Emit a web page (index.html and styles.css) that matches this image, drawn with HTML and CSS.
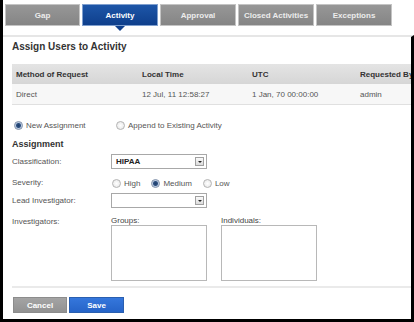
FILE: index.html
```html
<!DOCTYPE html>
<html>
<head>
<meta charset="utf-8">
<link rel="stylesheet" href="styles.css">
</head>
<body>
<div class="frame">
  <div class="tabs">
    <div class="tab">Gap</div>
    <div class="tab active">Activity</div>
    <div class="tab">Approval</div>
    <div class="tab">Closed Activities</div>
    <div class="tab">Exceptions</div>
  </div>
  <div class="panel">
    <div class="title">Assign Users to Activity</div>
    <table class="grid">
      <thead>
        <tr><th class="c1">Method of Request</th><th class="c2">Local Time</th><th class="c3">UTC</th><th class="c4">Requested By</th></tr>
      </thead>
      <tbody>
        <tr><td>Direct</td><td>12 Jul, 11 12:58:27</td><td>1 Jan, 70 00:00:00</td><td>admin</td></tr>
      </tbody>
    </table>
    <div class="mode">
      <span class="opt"><span class="radio on"></span>New Assignment</span>
      <span class="opt"><span class="radio"></span>Append to Existing Activity</span>
    </div>
    <div class="section">Assignment</div>
    <div class="form">
      <div class="label">Classification:</div>
      <div class="select"><span class="val">HIPAA</span><span class="drop"></span></div>
      <div class="label sev">Severity:</div>
      <div class="sevopts">
        <span class="opt"><span class="radio"></span>High</span>
        <span class="opt"><span class="radio on"></span>Medium</span>
        <span class="opt"><span class="radio"></span>Low</span>
      </div>
      <div class="label lead">Lead Investigator:</div>
      <div class="select lead"><span class="val"></span><span class="drop"></span></div>
      <div class="label inv">Investigators:</div>
      <div class="lists">
        <div class="list"><div class="lname">Groups:</div><div class="box"></div></div>
        <div class="list"><div class="lname">Individuals:</div><div class="box"></div></div>
      </div>
    </div>
    <div class="sep"></div>
    <div class="buttons">
      <button class="btn cancel">Cancel</button>
      <button class="btn save">Save</button>
    </div>
  </div>
</div>
</body>
</html>
```
FILE: styles.css
```css
html, body { margin: 0; padding: 0; }
body {
  background: #000;
  width: 414px;
  height: 322px;
  overflow: hidden;
  font-family: "Liberation Sans", Arial, sans-serif;
  font-size: 8px;
  color: #555;
}
.frame {
  margin-left: 3px;
  width: 411px;
  height: 319px;
  background: #fff;
  display: flex;
  flex-direction: column;
}
.tabs {
  display: flex;
  gap: 2px;
  padding: 4px 0 0 2px;
  height: 31px;
  box-sizing: border-box;
}
.tab {
  position: relative;
  width: 76px;
  height: 22px;
  box-sizing: border-box;
  background: linear-gradient(#979797, #858585);
  border: 1px solid #c4c4c4;
  color: #ececec;
  font-weight: bold;
  font-size: 8px;
  display: flex;
  align-items: center;
  justify-content: center;
}
.tab:first-child { width: 75px; }
.tab.active {
  background: linear-gradient(#1d56a8, #0f3f8c);
  border-color: #7f9fce;
  color: #fff;
}
.tab.active::after {
  content: "";
  position: absolute;
  left: 50%;
  bottom: -6px;
  margin-left: -5px;
  border-left: 5px solid transparent;
  border-right: 5px solid transparent;
  border-top: 5px solid #0f3f8c;
}
.panel {
  flex: 1;
  margin-top: 4px;
  border-top: 2px solid #e6e6e6;
  border-right: 3px solid #000;
  padding-left: 9px;
  overflow: hidden;
  display: flex;
  flex-direction: column;
  align-items: flex-start;
}
.title {
  margin-top: 4px;
  line-height: 12px;
  font-size: 10px;
  font-weight: bold;
  color: #333;
}
.grid {
  margin-top: 11px;
  width: 420px;
  border-collapse: collapse;
  flex-shrink: 0;
}
.grid th, .grid td {
  text-align: left;
  padding: 0 0 0 4px;
  height: 20px;
  white-space: nowrap;
}
.grid th {
  background: linear-gradient(#e4e4e4, #d6d6d6);
  color: #333;
  font-weight: bold;
}
.grid td {
  background: #f7f7f7;
  border-bottom: 1px solid #e0e0e0;
  color: #555;
}
.c1 { width: 122px; }
.c2 { width: 106px; }
.c3 { width: 104px; }
.mode {
  margin-top: 13px;
  height: 14px;
  display: flex;
  align-items: center;
}
.mode .opt:first-child { width: 102px; padding-left: 2px; }
.opt {
  display: inline-flex;
  align-items: center;
  gap: 3px;
}
.radio {
  width: 7px;
  height: 7px;
  border-radius: 50%;
  border: 1px solid #b4b4b4;
  background: radial-gradient(#fff, #e4e4e4);
  box-sizing: content-box;
  display: inline-block;
}
.radio.on {
  border-color: #7d8ea8;
  background: radial-gradient(circle, #1d3d6a 0, #2c4f80 2px, #b8c8de 3px, #e6edf6 4px);
}
.section {
  margin-top: 6px;
  line-height: 12px;
  font-weight: bold;
  font-size: 9px;
  color: #333;
}
.form {
  margin-top: 4px;
  display: grid;
  grid-template-columns: 99px auto;
  align-items: center;
}
.label { height: 14px; line-height: 14px; }
.sev, .sevopts { margin-top: 7px; height: 14px; }
.sevopts {
  display: flex;
  align-items: center;
  gap: 11px;
  padding-left: 1px;
}
.lead { margin-top: 3px; }
.select {
  width: 96px;
  height: 15px;
  box-sizing: border-box;
  border: 1px solid #a8a8a8;
  display: flex;
  align-items: center;
  justify-content: space-between;
  padding: 0 2px 0 4px;
  background: #fff;
}
.val { font-weight: bold; color: #222; font-size: 8px; }
.drop {
  width: 9px;
  height: 9px;
  box-sizing: border-box;
  border: 1px solid #a0a0a0;
  background: linear-gradient(#fafafa, #dcdcdc);
  position: relative;
}
.drop::after {
  content: "";
  position: absolute;
  left: 2px;
  top: 3px;
  border-left: 2px solid transparent;
  border-right: 2px solid transparent;
  border-top: 2px solid #222;
}
.inv { align-self: start; margin-top: 8px; height: 12px; line-height: 12px; }
.lists {
  align-self: start;
  margin-top: 8px;
  display: flex;
  gap: 14px;
}
.lname { line-height: 10px; height: 9px; color: #444; }
.box {
  width: 96px;
  height: 56px;
  box-sizing: border-box;
  border: 1px solid #b8b8b8;
  background: #fff;
}
.sep {
  margin-top: 5px;
  width: 410px;
  height: 2px;
  background: #eaeaea;
  flex-shrink: 0;
}
.buttons {
  margin-top: 9px;
  display: flex;
  gap: 2px;
  padding-left: 1px;
}
.btn {
  height: 16px;
  border: 1px solid #8a8a8a;
  font-family: "Liberation Sans", Arial, sans-serif;
  font-size: 8px;
  font-weight: bold;
  color: #fff;
  padding: 0;
}
.cancel { width: 54px; background: linear-gradient(#a4a4a4, #929292); border-color: #8c8c8c; }
.save { width: 55px; background: linear-gradient(#3577dc, #2664c8); border-color: #2a5fb0; }
```
